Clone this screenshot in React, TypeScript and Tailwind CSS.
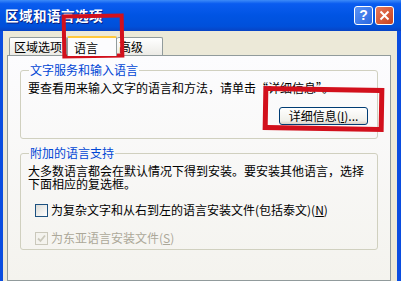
import type { ReactNode } from 'react';

const font = "font-['SimSun','Noto_Sans_CJK_SC',sans-serif]";

function GroupBox({ label, className, children }: { label: string; className?: string; children: ReactNode }) {
  return (
    <fieldset className={`border border-[#D0D0BF] rounded-[3px] px-[7px] ${className ?? ''}`}>
      <legend className="ml-[1px] px-[1px] text-[#0046D5] leading-[14px]">{label}</legend>
      {children}
    </fieldset>
  );
}

function Checkbox({ checked, disabled, children }: { checked?: boolean; disabled?: boolean; children: ReactNode }) {
  return (
    <div className={`h-[14px] flex items-center gap-[3px] whitespace-nowrap ${disabled ? 'text-[#ACA899]' : 'text-black'}`}>
      <span
        className={`w-[13px] h-[13px] shrink-0 border flex items-center justify-center ${
          disabled ? 'border-[#CAC8BB] bg-[#F4F3EE]' : 'border-[#1C5180] bg-[linear-gradient(135deg,#DCDCD7,#FFFFFF)]'
        }`}
      >
        {checked && (
          <svg width="9" height="9" viewBox="0 0 9 9">
            <path d="M1 4.5 L3.5 7 L8 1.5" stroke={disabled ? '#CAC8BB' : '#21A121'} strokeWidth="1.8" fill="none" />
          </svg>
        )}
      </span>
      <span>{children}</span>
    </div>
  );
}

export default function App() {
  return (
    <div className={`relative w-[401px] h-[281px] overflow-hidden bg-[#0A4DE0] flex flex-col text-[12px] ${font}`}>
      {/* title bar */}
      <div className="h-[31px] shrink-0 flex items-center pl-[5px] pr-[7px] bg-[linear-gradient(180deg,#3D8BF8_0%,#0A5CF0_12%,#0054E3_50%,#0050DA_85%,#0843C4_100%)]">
        <span className="text-white font-bold text-[13.5px] tracking-[0.5px] [text-shadow:1px_1px_0_#0A1E80]">区域和语言选项</span>
        <div className="ml-auto flex gap-[2px]">
          <div className="w-[19px] h-[19px] rounded-[3px] border border-white bg-[linear-gradient(135deg,#5A93F5,#2B67E0)] flex items-center justify-center text-white font-bold text-[14px] font-['Liberation_Sans',sans-serif]">
            ?
          </div>
          <div className="w-[19px] h-[19px] rounded-[3px] border border-white bg-[linear-gradient(135deg,#E8795A,#C8411E)] flex items-center justify-center">
            <svg width="11" height="11" viewBox="0 0 11 11">
              <path d="M1.5 1.5 L9.5 9.5 M9.5 1.5 L1.5 9.5" stroke="#fff" strokeWidth="2" />
            </svg>
          </div>
        </div>
      </div>

      {/* client */}
      <div className="flex-1 ml-[3px] mr-[4px] bg-[#ECE9D8] pl-[4px] pr-[6px] pt-[5px] flex flex-col">
        <div className="flex items-end h-[19px] pl-[2px]">
          <div className="h-[18px] w-[58px] border border-b-0 border-[#919B9C] rounded-t-[2px] bg-[linear-gradient(180deg,#FFFFFF,#ECEBE6)] flex items-center justify-center">
            区域选项
          </div>
          <div className="relative z-10 h-[20px] -mb-[1px] w-[50px] pl-[6px] border border-b-0 border-[#919B9C] border-t-[#FFC83C] border-t-2 rounded-t-[2px] bg-[#FCFCFE] flex items-start pt-[1px]">
            语言
          </div>
          <div className="h-[18px] w-[46px] pl-[2px] border border-b-0 border-l-0 border-[#919B9C] rounded-t-[2px] bg-[linear-gradient(180deg,#FFFFFF,#ECEBE6)] flex items-center">
            高级
          </div>
        </div>
        <div className="flex-1 border border-[#919B9C] bg-[linear-gradient(180deg,#FCFCFE,#F4F3EE)] px-[12px] pt-[7px] flex flex-col gap-[7px]">
          <GroupBox label="文字服务和输入语言" className="h-[76px]">
            <div className="mt-[4px] leading-[14px] whitespace-nowrap">要查看用来输入文字的语言和方法，请单击“详细信息”。</div>
            <div className="flex justify-end mt-[12px] pr-[2px]">
              <div className="h-[18px] w-[89px] border border-[#003C74] rounded-[3px] bg-[linear-gradient(180deg,#FFFFFF,#F0F0EA_80%,#D6D0C5)] flex items-center justify-center">
                详细信息(<span className="underline">I</span>)...
              </div>
            </div>
          </GroupBox>
          <GroupBox label="附加的语言支持" className="h-[104px]">
            <div className="mt-[4px] leading-[13px] whitespace-nowrap">
              大多数语言都会在默认情况下得到安装。要安装其他语言，选择
              <br />
              下面相应的复选框。
            </div>
            <div className="mt-[13px] pl-[7px] flex flex-col gap-[14px]">
              <Checkbox>
                为复杂文字和从右到左的语言安装文件(包括泰文)(<span className="underline">N</span>)
              </Checkbox>
              <Checkbox checked disabled>
                为东亚语言安装文件(<span className="underline">S</span>)
              </Checkbox>
            </div>
          </GroupBox>
        </div>
      </div>

      {/* red annotation marks */}
      <div className="absolute left-[62px] top-[14px] w-[62px] h-[44px] border-[4px] border-[#D2101C] -rotate-[1deg]" />
      <div className="absolute left-[263px] top-[87px] w-[121px] h-[44px] border-[5px] border-[#D2101C] rotate-[1deg]" />
    </div>
  );
}
